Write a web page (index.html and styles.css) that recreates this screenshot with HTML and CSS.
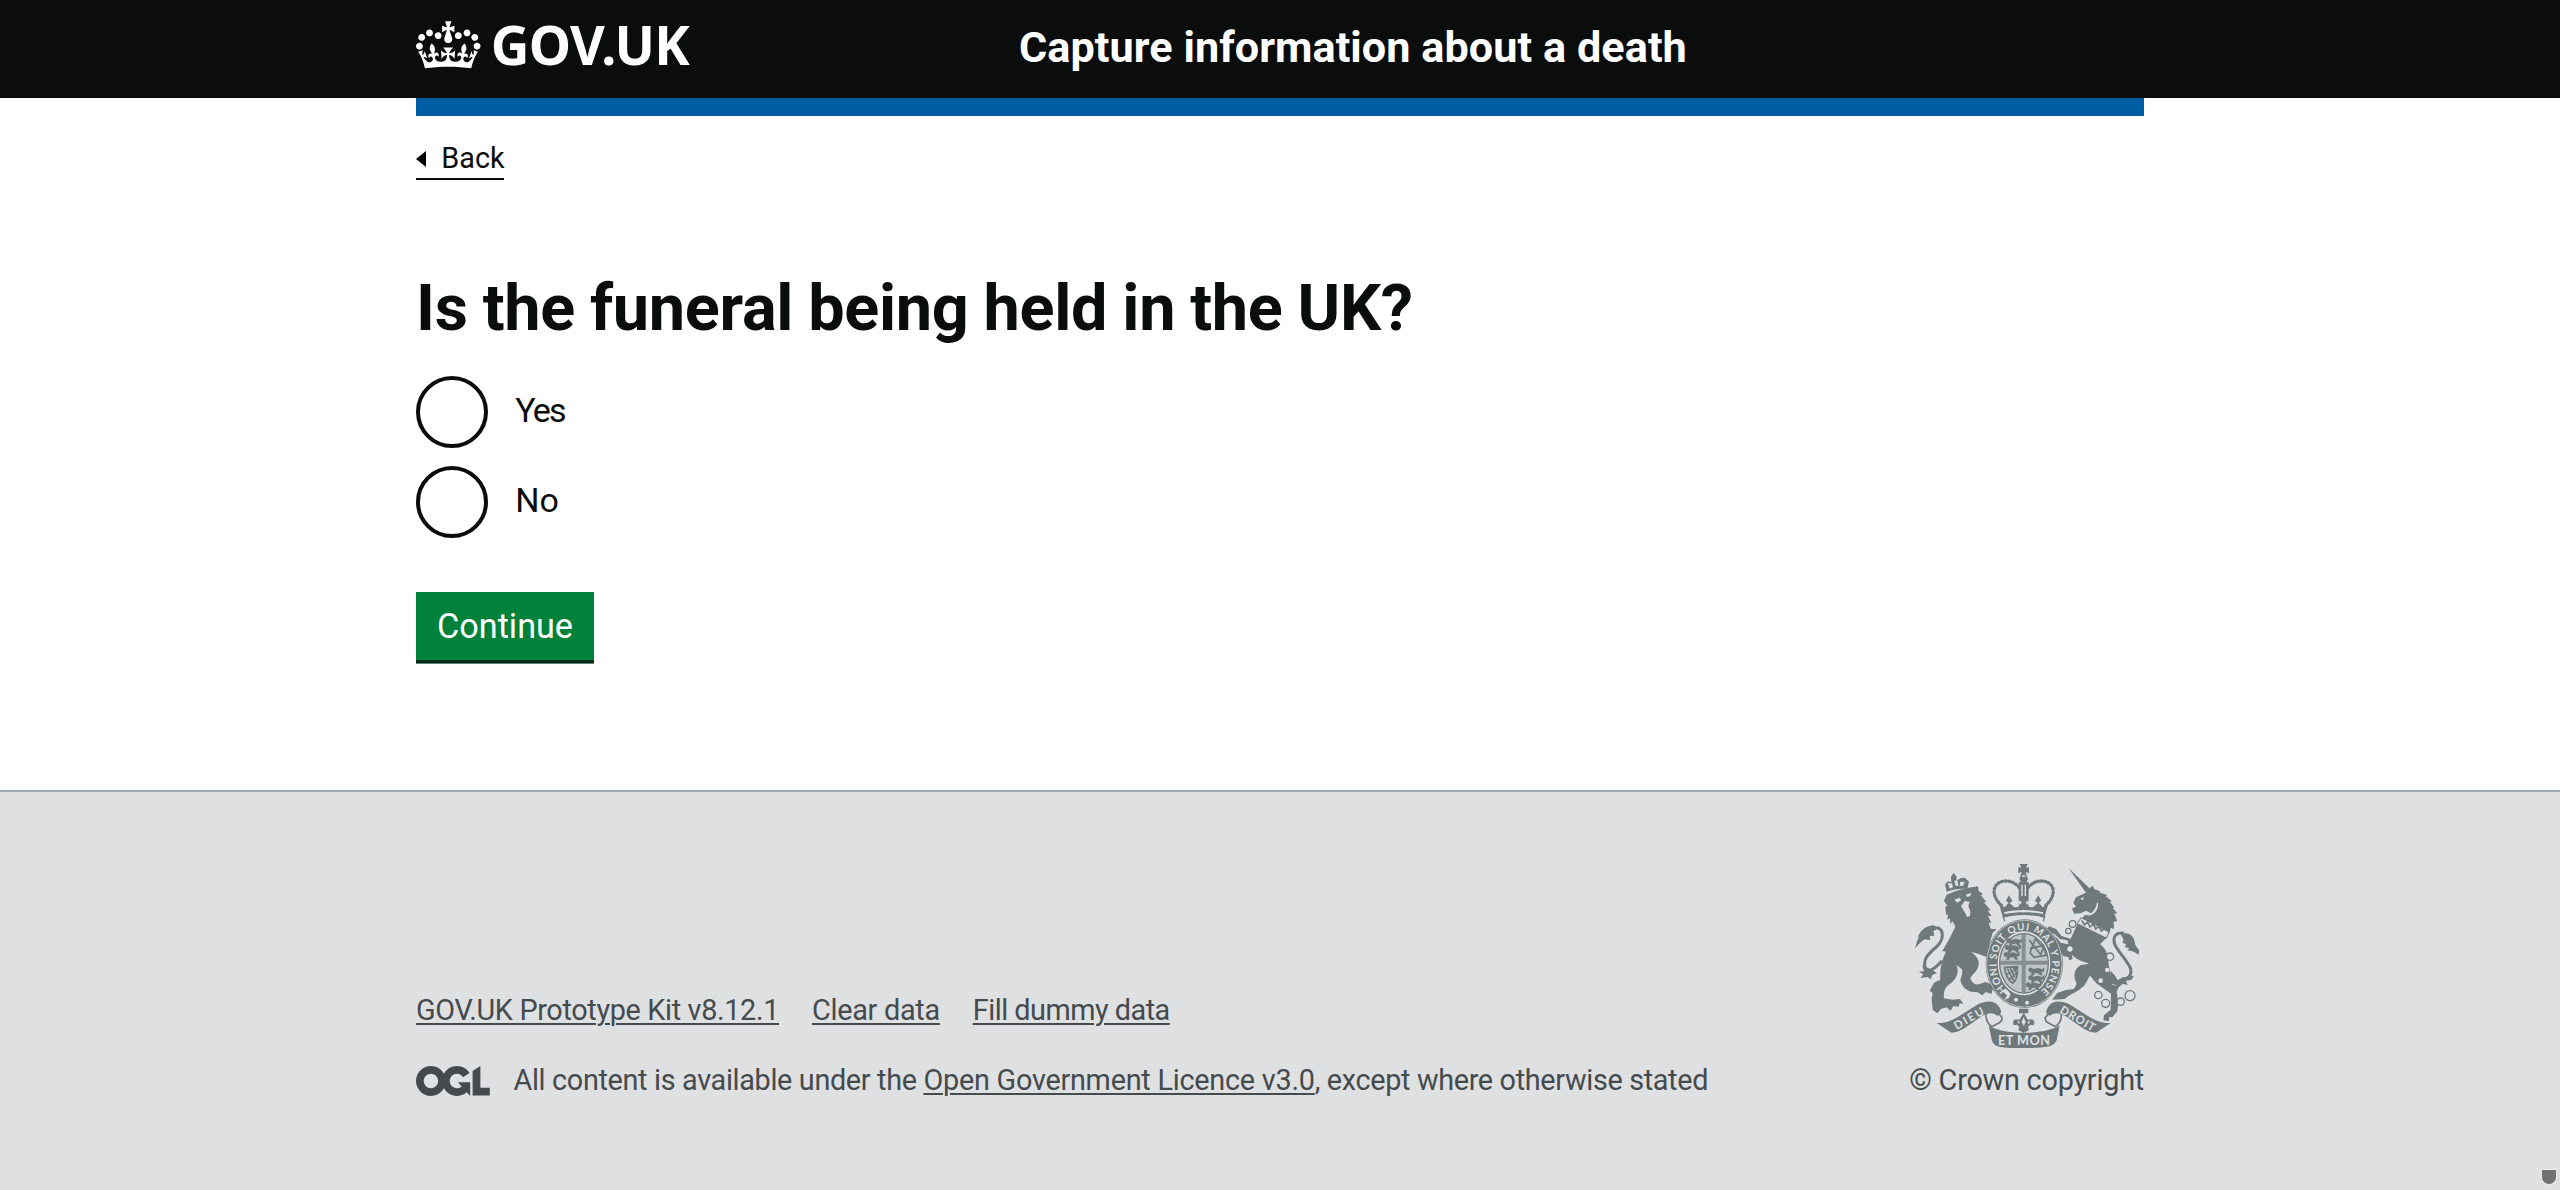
FILE: index.html
```html
<!DOCTYPE html>
<html lang="en">
<head>
<meta charset="utf-8">
<title>Is the funeral being held in the UK?</title>
<link rel="stylesheet" href="styles.css">
</head>
<body>
<header class="header">
  <div class="container header-inner">
    <a class="logo" href="#">
      <svg class="crown" viewBox="0 0 132 97" aria-hidden="true"><path fill="currentColor" fill-rule="evenodd" d="M25 30.2c3.5 1.5 7.7-.2 9.1-3.7 1.5-3.6-.2-7.8-3.9-9.2-3.6-1.4-7.6.3-9.1 3.9-1.4 3.5.3 7.5 3.9 9zM9 39.5c3.6 1.5 7.8-.2 9.2-3.7 1.5-3.6-.2-7.8-3.9-9.1-3.6-1.5-7.6.2-9.1 3.8-1.4 3.5.3 7.5 3.8 9zM4.4 57.2c3.5 1.5 7.7-.2 9.1-3.8 1.5-3.6-.2-7.7-3.9-9.1-3.5-1.5-7.6.3-9.1 3.8-1.4 3.5.3 7.6 3.9 9.1zm38.3-21.4c3.5 1.5 7.7-.2 9.1-3.8 1.5-3.6-.2-7.7-3.9-9.1-3.6-1.5-7.6.3-9.1 3.8-1.3 3.6.4 7.7 3.9 9.1zm64.4-5.6c-3.6 1.5-7.8-.2-9.1-3.7-1.5-3.6.2-7.8 3.8-9.2 3.6-1.4 7.7.3 9.2 3.9 1.3 3.5-.4 7.5-3.9 9zm15.9 9.3c-3.6 1.5-7.7-.2-9.1-3.7-1.5-3.6.2-7.8 3.7-9.1 3.6-1.5 7.7.2 9.2 3.8 1.5 3.5-.3 7.5-3.8 9zm4.7 17.7c-3.6 1.5-7.8-.2-9.2-3.8-1.5-3.6.2-7.7 3.9-9.1 3.6-1.5 7.7.3 9.2 3.8 1.3 3.5-.4 7.6-3.9 9.1zM89.3 35.8c-3.6 1.5-7.8-.2-9.2-3.8-1.4-3.6.2-7.7 3.9-9.1 3.6-1.5 7.7.3 9.2 3.8 1.4 3.6-.3 7.7-3.9 9.1zM69.7 17.7l8.9 4.7V9.3l-8.9 2.8c-.2-.3-.5-.6-.9-.9L72.4 0H59.6l3.5 11.2c-.3.3-.6.5-.9.9l-8.8-2.8v13.1l8.8-4.7c.3.3.6.7.9.9l-5 15.4v.1c-.2.8-.4 1.6-.4 2.4 0 4.1 3.1 7.5 7 8.1h.2c.3 0 .7.1 1 .1.4 0 .7 0 1-.1h.2c4-.6 7.1-4.1 7.1-8.1 0-.8-.1-1.7-.4-2.4V34l-5.1-15.4c.4-.2.7-.6 1-.9zM66 92.8c16.9 0 32.8 1.1 47.1 3.2 4-16.9 8.9-26.7 14-33.5l-9.6-3.4c1 4.9 1.1 7.2 0 10.2-1.5-1.4-3-4.3-4.2-8.7L108.6 76c2.8-2 5-3.2 7.5-3.3-4.4 9.4-10 11.9-13.6 11.2-4.3-.8-6.3-4.6-5.6-7.9 1-4.7 5.7-5.9 8-.5 4.3-8.7-3-11.4-7.6-8.8 7.1-7.2 7.9-13.5 2.1-21.1-8 6.1-8.1 12.3-4.5 20.8-4.7-5.4-12.1-2.5-9.5 6.2 3.4-5.2 7.9-2 7.2 3.1-.6 4.3-6.4 7.8-13.5 7.2-10.3-.9-10.9-8-11.2-13.8 2.5-.5 7.1 1.8 11 7.3L80.2 60c-4.1 4.4-8 5.3-12.3 5.4 1.4-4.4 8-11.6 8-11.6H55.5s6.4 7.2 7.9 11.6c-4.2-.1-8-1-12.3-5.4l1.4 16.4c3.9-5.5 8.5-7.7 10.9-7.3-.3 5.8-.9 12.8-11.1 13.8-7.2.6-12.9-2.9-13.5-7.2-.7-5 3.8-8.3 7.1-3.1 2.7-8.7-4.6-11.6-9.4-6.2 3.7-8.5 3.6-14.7-4.6-20.8-5.8 7.6-5 13.9 2.2 21.1-4.7-2.6-11.9.1-7.7 8.8 2.3-5.5 7.1-4.2 8.1.5.7 3.3-1.3 7.1-5.7 7.9-3.5.7-9-1.8-13.5-11.2 2.5.1 4.7 1.3 7.5 3.3l-4.7-15.4c-1.2 4.4-2.7 7.2-4.3 8.7-1.1-3-.9-5.3 0-10.2l-9.5 3.4c5 6.9 9.9 16.7 14 33.5 14.8-2.1 30.8-3.2 47.7-3.2z"/></svg>
      <span class="logo-text">GOV.UK</span>
    </a>
    <a class="service" href="#">Capture information about a death</a>
  </div>
</header>
<div class="container">
  <div class="bar"></div>
  <a class="back" href="#"><svg class="arrow" viewBox="0 0 10 16" aria-hidden="true"><path d="M0 8 10 0v16z"/></svg>Back</a>
  <main>
    <h1>Is the funeral being held in the UK?</h1>
    <form class="form">
      <label class="radio"><span class="dot"></span><span class="radio-text yes">Yes</span></label>
      <label class="radio"><span class="dot"></span><span class="radio-text">No</span></label>
      <button class="button" type="button">Continue</button>
    </form>
  </main>
</div>
<footer class="footer">
  <div class="container meta">
    <div class="meta-main">
      <nav class="links"><a class="kit" href="#">GOV.UK Prototype Kit v8.12.1</a><a class="clear" href="#">Clear data</a><a class="fill" href="#">Fill dummy data</a></nav>
      <div class="licence">
        <svg class="ogl" viewBox="0 0 483.2 195.7" aria-hidden="true"><path fill="currentColor" d="M421.5 142.8V.1l-50.7 32.3v161.1h112.4v-50.7zm-122.3-9.6A47.12 47.12 0 0 1 221 97.8c0-26 21.1-47.1 47.1-47.1 16.7 0 31.4 8.7 39.7 21.8l42.7-27.2A97.63 97.63 0 0 0 268.1 0c-36.5 0-68.3 20.1-85.1 49.7A98 98 0 0 0 97.8 0C43.9 0 0 43.9 0 97.8s43.9 97.8 97.8 97.8c36.5 0 68.3-20.1 85.1-49.7a97.76 97.76 0 0 0 149.6 25.4l19.4 22.2h3v-87.8h-80l24.3 27.5zM97.8 145c-26 0-47.1-21.1-47.1-47.1s21.1-47.1 47.1-47.1 47.1 21.1 47.1 47.1S123.8 145 97.8 145"/></svg>
        <span>All content is available under the <a class="ogl-link" href="#">Open Government Licence v3.0</a>, except where otherwise stated</span>
      </div>
    </div>
    <a class="copyright" href="#">
      <svg class="arms" viewBox="72 42 675 552" aria-hidden="true">
        <defs>
          <path id="garter" d="M350 420A84 101 0 1 1 456 420"/>
          <g id="halfcrown">
            <path class="beads" d="M334 166C296 130 312 92 350 93c18 1 30 10 40 22"/>
            <path class="ink" d="M328 162l16 10 12-14-8-6 9-16 10 16-8 8 14 12 28-2v24c-24 0-44 3-62 10-4-16-9-30-11-42z"/>
          </g>
          <path id="lions" class="ink" d="M0 8l8-6 8 5 14-3 12 4 8-6-2 12-8 4 4 8h-8l-6-7-10 1-4 7-8-1 4-8-8-1z"/>
        </defs>
        <!-- lion -->
        <g>
          <path class="ink" d="M170 125l-5-22 9-9 10 3-1-17 8-12 9 12-1 12 14-8 12-1 12 12-5 22c-22-2-42 1-62 8z"/>
          <path class="pale" d="M173 100l7 16 9-4-3-12zM193 92l4 16 8-1-3-16zM211 95l-2 12 10 1 5-12z"/>
          <path class="ink" d="M162 152l8-18c30-14 62-20 94-25l2 14 14 10-8 2 18 22-9-1 22 26-10-1 12 18-11-2 10 22-8-1 6 18 18 2-12 10-10 36 8 26 18 14-8 18-10-12-4 16-11-4-2-22c-18-6-32-12-46-14 14 9 25 22 23 38-2 20-22 30-25 42 6 14 16 19 26 17l20-7 22 9 10 18-12-3-2 12-18-6-10 10-14-9-20-2c-18-5-28-18-32-34 4-14 8-24 5-33l-16-13c8 22 0 44-22 58-14 10-18 23-16 42l26 4 22-2 10 14-11-1-3 10-16-2-8 14-13-10-16 5-11 13-14-11-3-32 3-18-9-7 13-24 19-9c-2-32 4-58 17-84l-11-2 24-42 15-31-8-16-7 8-1-17-8 4 2-17-6 3-2-25 6-2z"/>
          <path class="pale" d="M193 149l15-6 6 7-12 8zM228 134l16-6-4 11-9 2zM213 168l12-16 14 4-4 12 6 16-1 14-9 3-4-10z"/>
          <path class="ink" d="M72 298c10-12 6-30 20-42l-9 7c8-22 24-36 50-37l6 13-9 3 3 15-14 1 2 12-18-2c-11 8-20 18-31 30z"/>
          <path class="tail" d="M128 234c38-8 34 34 14 54-30 26-44 40-36 66 6 14 24 8 50-22"/>
          <path class="ink" d="M96 346l6 18-16 1 14 8-9 11 22-3 9 7 5-13 14-6-15-9z"/>
        </g>
        <!-- unicorn -->
        <g>
          <path class="ink" d="M535 53l68 66-13 12z"/>
          <path class="ink" d="M550 158l8-16 30-14 12-14 8-7 5 11 18 6-4 3 24 8-4 4 19 15-7 1 14 18-5 1 14 16-9 1 9 22-11 2 1 22-10-4-4 18c-20-18-46-32-86-42l12-13 22-4-17-10-18 8-19 1-6-16 12-5z"/>
          <path class="pale" d="M570 146l12-5-3 9zM624 158c2 24-12 37-33 40 17-10 27-22 30-40z"/>
          <path class="collar" d="M573 203l84 43-8 19-87-44z"/>
          <path class="zig" d="M575 211l9 14 9-9 7 15 10-9 7 15 10-8 7 14 10-8"/>
          <path class="ink" d="M563 221l87 42-20 20c20 14 26 36 26 62 6 18 8 40 10 59l21 4-7 18 5 32-3 26-15 18-9-1-2 13-16-3 2-15 20-17 1-48-44-31-19-23c-9 12-11 26-26 37-16 14-36 20-50 33l-38 2 16-20 26-9 24-3 8-16c-12-24-8-44 13-56l24-4c-24-8-42-14-52-28l3 14-10 4-3-10-14-2-20-23-5-18-14-8 5-12 14 6 11 14 23 5-3-12-22-4-20-17-16 2-8-12 12-11 20 8 16 21 28 8z"/>
          <path class="tail" d="M702 250c-26-4-34 12-28 32 8 22 36 46 48 74 4 24-12 34-28 30"/>
          <path class="ink" d="M692 252c24-8 42 4 44 34l11 14v14c-10-4-22-14-34-12l4-8-12-2 3-10-11-4 4-8zM662 362l14 16 6 12 20-8 30-5-8 13-16 2 5 13-15-4-12 11-9-8-13-2z"/>
          <g class="chain"><circle cx="548" cy="222" r="10"/><circle cx="535" cy="243" r="8"/><circle cx="540" cy="297" r="10"/><circle cx="660" cy="320" r="11"/><circle cx="625" cy="435" r="11"/><circle cx="647" cy="460" r="12"/><circle cx="692" cy="455" r="11"/><circle cx="720" cy="437" r="15"/></g>
          <circle class="pale" cx="652" cy="360" r="7"/><circle class="pale" cx="632" cy="392" r="7"/>
        </g>
        <!-- crown -->
        <use href="#halfcrown"/><use href="#halfcrown" transform="matrix(-1 0 0 1 802 0)"/>
        <path class="ink" d="M389 42h24l-5 12 9-3v19l-10-4 7 22-5 8h7v80h-30V96h7l-5-8 7-22-10 4V51l9 3z"/>
        <path class="pale" d="M394 104h4v34h-4zM404 104h4v34h-4zM396 76h10v4h-10zM386 150l10 8-10 8zM416 150l-10 8 10 8z"/>
        <path class="pale" d="M342 187c34-9 84-9 118 0l-2 5c-36-7-78-7-114 0z"/>
        <path class="thin" d="M340 200c38-9 86-9 124 0l-4 14M340 200l4 14"/>
        <!-- garter and shield -->
        <ellipse class="ink" cx="403" cy="341" rx="116" ry="133"/>
        <ellipse class="rim" cx="403" cy="341" rx="113" ry="130"/>
        <ellipse class="pale" cx="402" cy="340" rx="79" ry="96"/>
        <ellipse class="shield" cx="402" cy="340" rx="73" ry="89"/>
        <use href="#lions" x="344" y="282"/><use href="#lions" x="340" y="303"/><use href="#lions" x="348" y="262"/>
        <use href="#lions" x="414" y="350"/><use href="#lions" x="414" y="373"/><use href="#lions" x="406" y="394"/>
        <path class="zig2" d="M418 270l34 44 8-20-24-28-16 42 12 14 36-6-8-30-40 10"/>
        <path class="zig2" d="M344 352l38-2c2 26-2 42-14 50-14-10-22-24-24-48zM352 356l20 38M360 354l15 28M370 352l9 18M350 374l30-20M358 388l24-20"/>
        <path class="cross" d="M401 251v178M329 338h146"/>
        <g class="pale"><circle cx="378" cy="449" r="6"/><circle cx="411" cy="458" r="6"/><path d="M337 424l14 12-8 14 14-6 5-12-12-14z"/></g>
        <text class="motto"><textPath href="#garter">HONI SOIT QUI MAL Y PENSE</textPath></text>
        <path class="ink" d="M387 476h28v14h-28zM401 488l13 22c14-8 24 4 16 16l-8-2-8 6 3 10-16 9-16-9 3-10-8-6-8 2c-8-12 2-24 16-16z"/>
        <path class="pale" d="M401 502l6 14-6 12-6-12zM381 512l8 3-2 8zM421 512l-8 3 2 8z"/>
        <!-- ribbons -->
        <path class="fold" d="M288 487c22-3 42 3 48 16 2 16-16 18-30 27-12-8-20-18-18-43zM514 487c-22-3-42 3-48 16-2 16 16 18 30 27 12-8 20-18 18-43z"/>
        <path class="ink" d="M140 519c44 4 82-32 124-56 28-13 52-10 62 6 12 16 8 26-6 28-10-12-34-9-60 12-30 20-46 37-76 39zM662 519c-44 4-82-32-124-56-28-13-52-10-62 6-12 16-8 26 6 28 10-12 34-9 60 12 30 20 46 37 76 39z"/>
        <path class="ink" d="M296 526c40 30 170 30 213 0l-9 44c-8 20-28 24-98 24s-88-2-96-22z"/>
        <text class="ribbon side" transform="translate(200 540) rotate(-30)" textLength="98">DIEU</text>
        <text class="ribbon side" transform="translate(507 487) rotate(30)" textLength="116">DROIT</text>
        <text class="ribbon" x="324" y="584" textLength="156">ET MON</text>
      </svg>
      <span>© Crown copyright</span>
    </a>
  </div>
</footer>
<div class="handle"></div>
</body>
</html>
```
FILE: styles.css
```css
* { box-sizing: border-box; }
body {
  margin: 0;
  min-height: 1190px;
  display: flex;
  flex-direction: column;
  position: relative;
  background: #fff;
  color: #0b0c0c;
  font-family: Roboto, "Liberation Sans", sans-serif;
}
a { color: inherit; }
svg { display: block; flex: none; }
.container { width: 1728px; margin: 0 auto; }

.header { height: 98px; background: #0b0c0c; color: #fff; }
.header-inner { display: grid; grid-template-columns: 603px 1fr; align-items: start; }
.header a { text-decoration: none; font-weight: 700; }
.logo { display: flex; padding-top: 20.5px; }
.crown { width: 64.5px; height: 48px; }
.logo-text {
  margin: -2.5px 0 0 10.3px;
  font-family: "Noto Sans", sans-serif;
  font-size: 53.5px;
  line-height: 54px;
  letter-spacing: -0.7px;
}
.service { padding-top: 25.6px; font-size: 43.2px; line-height: 43.2px; letter-spacing: 0.06px; }
.bar { height: 18px; background: #005ea5; }

.back {
  display: flex;
  align-items: center;
  gap: 15.3px;
  width: 88px;
  height: 40.5px;
  margin-top: 23.5px;
  padding-bottom: 1.5px;
  border-bottom: 2px solid #0b0c0c;
  font-size: 28.8px;
  line-height: 36px;
  text-decoration: none;
}
.arrow { width: 10px; height: 16px; margin-top: 2px; }
h1 {
  margin: 94px 0 34px;
  font-size: 64.8px;
  line-height: 68px;
  font-weight: 700;
  letter-spacing: -0.3px;
  word-spacing: -0.8px;
}
.form { display: flex; flex-direction: column; align-items: flex-start; gap: 18px; }
.radio { display: flex; height: 72px; }
.dot { width: 72px; height: 72px; border: 4px solid #0b0c0c; border-radius: 50%; }
.radio-text { padding: 11.5px 0 0 27.3px; font-size: 34px; line-height: 44px; }
.yes { letter-spacing: -1.8px; }
.button {
  width: 178px;
  height: 68px;
  margin-top: 36px;
  padding: 0;
  border: 0;
  background: #00823b;
  box-shadow: 0 3.6px 0 #002d18;
  color: #fff;
  font: 400 34.2px/69px Roboto, "Liberation Sans", sans-serif;
}

.footer {
  flex: 1;
  margin-top: 130px;
  padding-top: 72px;
  border-top: 2px solid #a1acb2;
  background: #dee0e2;
  color: #454a4d;
  font-size: 28.8px;
  line-height: 36px;
}
.footer a { text-underline-offset: 3px; text-decoration-thickness: 2px; }
.meta { display: flex; align-items: flex-end; justify-content: space-between; }
.links { display: flex; gap: 33px; margin-bottom: 34px; }
.kit { letter-spacing: -0.34px; }
.clear { letter-spacing: -0.28px; }
.fill { letter-spacing: -0.5px; }
.licence { display: flex; gap: 23.7px; letter-spacing: -0.33px; }
.ogl { width: 73.8px; height: 30px; margin-top: 3.5px; }
.ogl-link { letter-spacing: -0.24px; }
.footer .copyright {
  display: flex;
  flex-direction: column;
  align-items: center;
  gap: 14px;
  letter-spacing: -0.22px;
  text-decoration: none;
}

.arms { width: 225px; height: 184px; }
.ink { fill: #6f797b; }
.pale { fill: #dee0e2; }
.tail { fill: none; stroke: #6f797b; stroke-width: 9; }
.beads { fill: none; stroke: #6f797b; stroke-width: 10; stroke-linecap: round; stroke-dasharray: 3 8; }
.thin { fill: none; stroke: #6f797b; stroke-width: 4; }
.collar { fill: #dee0e2; stroke: #6f797b; stroke-width: 3; }
.zig, .zig2 { fill: none; stroke: #6f797b; stroke-width: 5; }
.chain { fill: #dee0e2; stroke: #6f797b; stroke-width: 4; }
.rim { fill: none; stroke: #dee0e2; stroke-width: 2; }
.shield { fill: #c0c5c7; stroke: #6f797b; stroke-width: 4; }
.cross { stroke: #858e91; stroke-width: 12; }
.fold { fill: #dee0e2; stroke: #6f797b; stroke-width: 5; }
.motto { fill: #dee0e2; font: 700 30px Lato, sans-serif; letter-spacing: 2.4px; }
.ribbon { fill: #dee0e2; font: 700 38px Lato, sans-serif; letter-spacing: 0; }
.side { font-size: 34px; }

.handle {
  position: absolute;
  right: 4px;
  bottom: 6px;
  width: 14px;
  height: 14px;
  border-radius: 0 0 7px 7px;
  background: #6f7173;
  box-shadow: 0 0 0 1px #e8eaeb;
}
```
